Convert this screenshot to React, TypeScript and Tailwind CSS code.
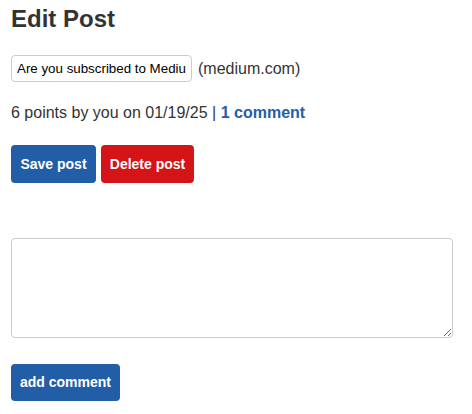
export default function App() {
  return (
    <div className="px-[11px] pt-[5px] text-[#333] font-['Liberation_Sans',Arial,sans-serif]">
      <h1 className="text-[24px] font-bold leading-[28px]">Edit Post</h1>
      <div className="mt-[22px] flex items-center gap-[6px]">
        <input
          className="w-[181px] h-[27px] border border-[#ccc] rounded-[4px] px-[5px] text-[13.33px] text-black outline-none bg-white"
          defaultValue="Are you subscribed to Medium?"
        />
        <span className="text-[16px]">(medium.com)</span>
      </div>
      <p className="mt-[21px] text-[16px] leading-[20px]">
        6 points by you on 01/19/25 |{" "}
        <a className="font-bold text-[#225ea8]">1 comment</a>
      </p>
      <div className="mt-[22px] flex gap-[5px]">
        <button className="h-[38px] w-[85px] rounded-[4px] bg-[#225ea8] text-white font-bold text-[14px]">
          Save post
        </button>
        <button className="h-[38px] w-[93px] rounded-[4px] bg-[#d41416] text-white font-bold text-[14px]">
          Delete post
        </button>
      </div>
      <textarea className="mt-[55px] block w-[442px] h-[100px] border border-[#ccc] rounded-[4px] bg-white outline-none" />
      <button className="mt-[26px] h-[37px] w-[109px] rounded-[4px] bg-[#225ea8] text-white font-bold text-[14px]">
        add comment
      </button>
    </div>
  );
}
